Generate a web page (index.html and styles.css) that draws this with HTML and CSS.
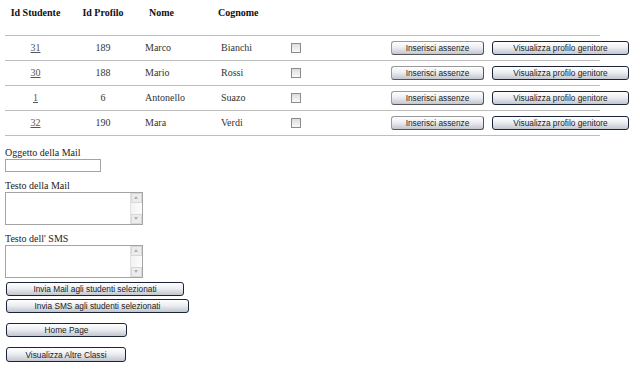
FILE: index.html
```html
<!DOCTYPE html>
<html lang="it">
<head>
  <meta charset="UTF-8">
  <title>Studenti della classe</title>
  <link rel="stylesheet" href="styles.css">
</head>
<body>

  <div class="tabella">
    <div class="riga intestazione">
      <div class="c1">Id Studente</div>
      <div class="c2">Id Profilo</div>
      <div class="c3">Nome</div>
      <div class="c4">Cognome</div>
    </div>

    <div class="riga">
      <div class="c1"><a href="#">31</a></div>
      <div class="c2">189</div>
      <div class="c3">Marco</div>
      <div class="c4">Bianchi</div>
      <div class="c5"><input type="checkbox"></div>
      <div class="c6">
        <button class="btn assenze">Inserisci assenze</button>
        <button class="btn genitore">Visualizza profilo genitore</button>
      </div>
    </div>

    <div class="riga">
      <div class="c1"><a href="#">30</a></div>
      <div class="c2">188</div>
      <div class="c3">Mario</div>
      <div class="c4">Rossi</div>
      <div class="c5"><input type="checkbox"></div>
      <div class="c6">
        <button class="btn assenze">Inserisci assenze</button>
        <button class="btn genitore">Visualizza profilo genitore</button>
      </div>
    </div>

    <div class="riga">
      <div class="c1"><a href="#">1</a></div>
      <div class="c2">6</div>
      <div class="c3">Antonello</div>
      <div class="c4">Suazo</div>
      <div class="c5"><input type="checkbox"></div>
      <div class="c6">
        <button class="btn assenze">Inserisci assenze</button>
        <button class="btn genitore">Visualizza profilo genitore</button>
      </div>
    </div>

    <div class="riga">
      <div class="c1"><a href="#">32</a></div>
      <div class="c2">190</div>
      <div class="c3">Mara</div>
      <div class="c4">Verdi</div>
      <div class="c5"><input type="checkbox"></div>
      <div class="c6">
        <button class="btn assenze">Inserisci assenze</button>
        <button class="btn genitore">Visualizza profilo genitore</button>
      </div>
    </div>
  </div>

  <form class="messaggi">
    <label for="oggetto" class="etichetta prima">Oggetto della Mail</label>
    <input type="text" id="oggetto" class="oggetto">

    <label for="testoMail" class="etichetta">Testo della Mail</label>
    <div class="area">
      <textarea id="testoMail" class="testo"></textarea>
      <div class="barra"><span class="su"></span><span class="giu"></span></div>
    </div>

    <label for="testoSms" class="etichetta">Testo dell' SMS</label>
    <div class="area">
      <textarea id="testoSms" class="testo"></textarea>
      <div class="barra"><span class="su"></span><span class="giu"></span></div>
    </div>

    <button type="button" class="btn invia-mail">Invia Mail agli studenti selezionati</button>
    <button type="button" class="btn invia-sms">Invia SMS agli studenti selezionati</button>
    <button type="button" class="btn home">Home Page</button>
    <button type="button" class="btn classi">Visualizza Altre Classi</button>
  </form>

</body>
</html>
```

FILE: styles.css
```css
body {
  margin: 0;
  padding: 0 5px;
  background-color: white;
  color: #333;
  font-family: 'Liberation Serif', 'Times New Roman', serif;
  font-size: 10px;
}
.tabella {
  width: 595px;
  border-bottom: 1px solid #bdbdbd;
}
.riga {
  display: grid;
  grid-template-columns: 61px 74px 76px 70px 100px 243px;
  align-items: center;
  height: 24px;
  border-top: 1px solid #bdbdbd;
  line-height: 12px;
}
.intestazione {
  height: 35px;
  border-top: none;
  align-items: start;
  padding-top: 7px;
  box-sizing: border-box;
  font-weight: bold;
  color: #111;
}
.c1, .c2 {
  text-align: center;
}
.c3 {
  padding-left: 5px;
}
.c4 {
  padding-left: 5px;
}
.intestazione .c3 {
  padding-left: 9px;
}
.intestazione .c4 {
  padding-left: 2px;
}
.c5 {
  padding-left: 5px;
  display: flex;
}
.c6 {
  padding-left: 5px;
  display: flex;
  gap: 8px;
}
a {
  color: #555;
}
input[type="checkbox"] {
  appearance: none;
  margin: 0;
  width: 10px;
  height: 10px;
  border: 1px solid #8c8c8c;
  background: linear-gradient(#dcdcdc, #fafafa);
}
.btn {
  flex-shrink: 0;
  height: 14px;
  padding: 0;
  font-family: 'Liberation Sans', Arial, sans-serif;
  font-size: 8.3px;
  color: #222;
  border: 1px solid #1c2438;
  border-radius: 3px;
  background: linear-gradient(#ffffff, #eceef2 45%, #c2c6ce);
  cursor: pointer;
}
.assenze {
  width: 93px;
  border-color: #9a9a9a #555 #555 #9a9a9a;
}
.genitore {
  width: 137px;
}
.messaggi {
  display: flex;
  flex-direction: column;
  align-items: flex-start;
}
.etichetta {
  line-height: 12px;
  margin-top: 8px;
  color: #222;
}
.prima {
  margin-top: 11px;
}
.oggetto {
  width: 96px;
  height: 13px;
  box-sizing: border-box;
  margin: 0;
  border: 1px solid #a4a4a4;
}
.area {
  display: flex;
  width: 138px;
  height: 33px;
  box-sizing: border-box;
  border: 1px solid #a4a4a4;
}
.testo {
  flex: 1;
  margin: 0;
  padding: 1px;
  border: none;
  resize: none;
  outline: none;
}
.barra {
  width: 11px;
  display: flex;
  flex-direction: column;
  justify-content: space-between;
  background: linear-gradient(90deg, #f2f2f2, #fcfcfc);
  border-left: 1px solid #e2e2e2;
}
.su, .giu {
  height: 8px;
  background: #ececec;
  border: 1px solid #d8d8d8;
  position: relative;
}
.su::after, .giu::after {
  content: "";
  position: absolute;
  left: 2px;
  top: 2px;
  border-left: 2px solid transparent;
  border-right: 2px solid transparent;
}
.su::after {
  border-bottom: 3px solid #b0b0b0;
}
.giu::after {
  border-top: 3px solid #b0b0b0;
}
.invia-mail {
  width: 178px;
  margin: 4px 0 0 1px;
}
.invia-sms {
  width: 183px;
  margin: 3px 0 0 1px;
}
.home {
  width: 121px;
  margin: 10px 0 0 1px;
}
.classi {
  width: 120px;
  height: 15px;
  margin: 10px 0 0 1px;
}
```
